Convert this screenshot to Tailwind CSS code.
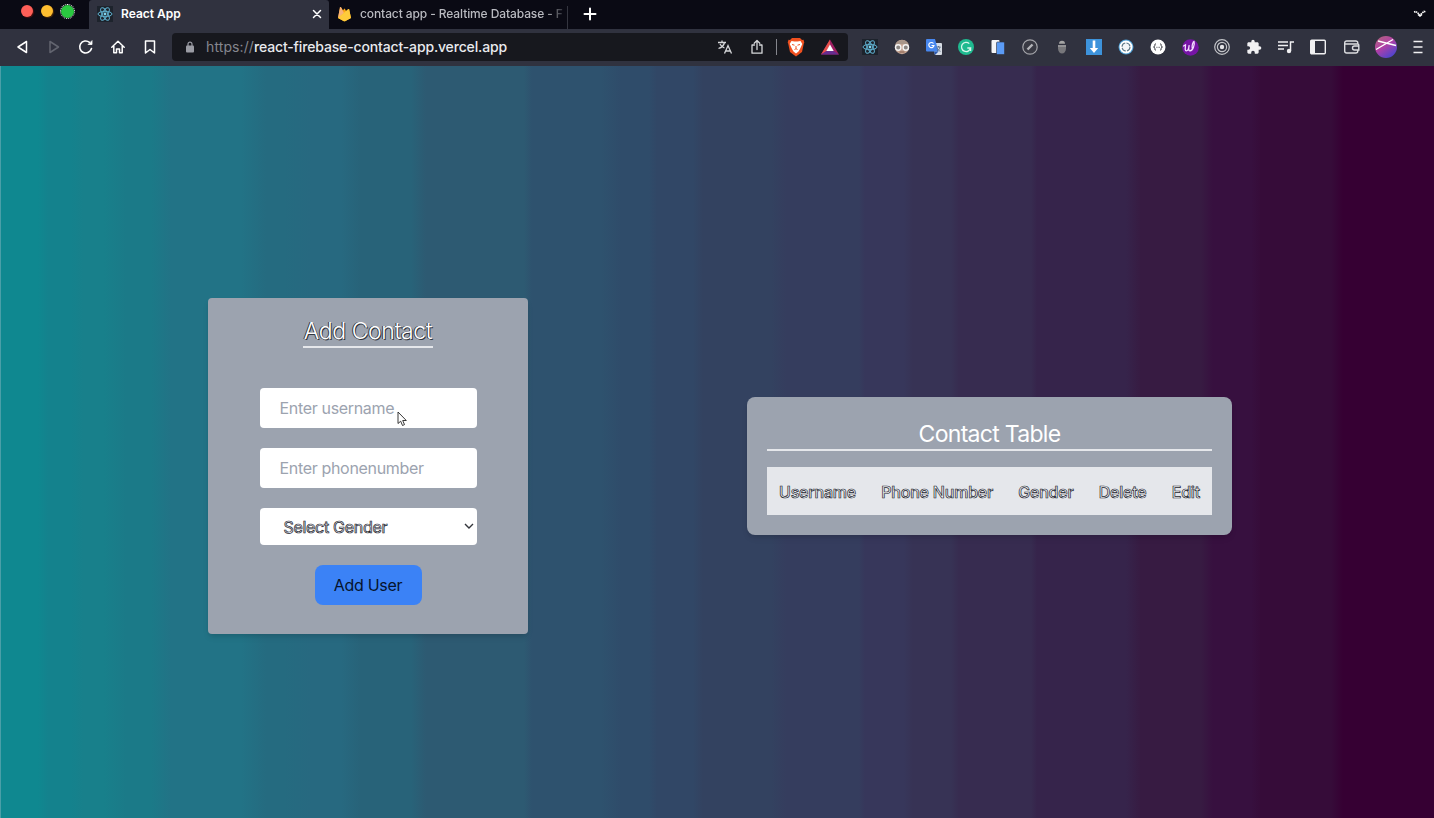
<!DOCTYPE html>
<html lang="en">
<head>
<meta charset="utf-8">
<title>React App</title>
<script src="https://cdn.jsdelivr.net/npm/@tailwindcss/browser@4"></script>
</head>
<body class="w-[1434px] h-[818px] overflow-hidden flex flex-col font-['Inter','Liberation_Sans',sans-serif] bg-[#30323f]">
<svg width="0" height="0" class="absolute">
  <defs>
    <symbol id="react" viewBox="0 0 16 16"><rect width="16" height="16" fill="#1d232c"/><g fill="none" stroke="#5fb0cf" stroke-width="1"><ellipse cx="8" cy="8" rx="7" ry="2.7"/><ellipse cx="8" cy="8" rx="7" ry="2.7" transform="rotate(60 8 8)"/><ellipse cx="8" cy="8" rx="7" ry="2.7" transform="rotate(120 8 8)"/></g><circle cx="8" cy="8" r="1.4" fill="#7fd4ee"/></symbol>
  </defs>
</svg>
<header class="h-[29px] shrink-0 flex bg-[#0a0a14]">
  <div class="w-[89px] pl-[21px] pt-[5px] flex gap-[8px]">
    <span class="size-[12px] rounded-full bg-[#fe5f58] shadow-[1px_1px_1px_#4a1010]"></span>
    <span class="size-[12px] rounded-full bg-[#febe30] shadow-[1px_1px_1px_#4a2a08]"></span>
    <span class="size-[13px] rounded-full bg-[#2ac840] outline-1 outline-dotted outline-white"></span>
  </div>
  <div class="w-[240px] flex items-center bg-[#30323f] pl-[8px] pr-[7px] pb-[2px] rounded-tl-[3px] rounded-tr-[3px]">
    <svg class="size-4"><use href="#react"/></svg>
    <span class="ml-[8px] text-[12px] font-semibold text-white leading-none">React App</span>
    <svg class="ml-auto size-[10px]" viewBox="0 0 10 10" stroke="#fff" stroke-width="1.5" stroke-linecap="round"><path d="M1.5 1.5l7 7M8.500 1.500l-7 7"/></svg>
  </div>
  <div class="w-[239px] flex items-center pl-[8px] pb-[2px]">
    <svg class="w-[15px] h-[17px] shrink-0" viewBox="0 0 15 17"><path d="M1 13L3 2.500Q3.300 1.500 4 2.300L6 5.500L7 4Q7.500 3 8 4L9 6L11.300 4.200Q12 3.800 12.200 4.500L14 13L8.500 16Q7.500 16.500 6.500 16Z" fill="#ffa712"/><path d="M1 13L3 2.500Q3.300 1.500 4 2.300L7 8Z" fill="#f8b27a"/><path d="M1 13L9 6L11.300 4.200Q12 3.800 12.200 4.500L14 13L8.500 16Q7.500 16.500 6.500 16Z" fill="#ffcb3b"/></svg>
    <span class="ml-[8px] w-[206px] whitespace-nowrap text-[12px] font-medium text-[#b9bac0] tracking-[-0.1px] leading-[16px] [mask-image:linear-gradient(90deg,#000_185px,transparent_208px)]">contact app - Realtime Database - F</span>
  </div>
  <div class="w-px h-[23px] mt-[6px] -ml-px bg-[#34353f]"></div>
  <svg class="ml-[15px] mt-[7px] w-[14px] h-[14px]" viewBox="0 0 14 14" stroke="#fff" stroke-width="2" stroke-linecap="round"><path d="M7 1.500v11M1.500 7h11"/></svg>
  <svg class="ml-auto mr-[7px] mt-[9px] w-[14px] h-[9px]" viewBox="0 0 14 9" fill="none" stroke="#fff"><path d="M1 3l2-.5L7 6l4-3.500 2 .5" stroke-width="1.600" stroke-dasharray="1.500 .6"/><path d="M5 5.500l2 1.500 2-1.500" stroke-width="1.500"/></svg>
</header>
<nav class="h-[37px] shrink-0 flex items-center bg-[#30323f] pl-[6px] pb-[2px]">
  <div class="flex text-white">
    <span class="w-8 grid place-items-center"><svg width="16" height="16" viewBox="0 0 16 16" fill="none" stroke="#fff" stroke-width="1.500" stroke-linejoin="round"><path d="M12.500 2.500v11L4 8z"/></svg></span>
    <span class="w-8 grid place-items-center"><svg width="16" height="16" viewBox="0 0 16 16" fill="none" stroke="#62646f" stroke-width="1.500" stroke-linejoin="round"><path d="M4 2.500v11L12.500 8z"/></svg></span>
    <span class="w-8 grid place-items-center"><svg width="16" height="16" viewBox="0 0 16 16" fill="none" stroke="#fff" stroke-width="1.600" stroke-linecap="round"><path d="M13.500 9.500A6 6 0 1 1 11.500 3.300"/><path d="M10.500 5.500h3.500V2z" fill="#fff" stroke-width=".8" stroke-linejoin="round"/></svg></span>
    <span class="w-8 grid place-items-center"><svg width="16" height="16" viewBox="0 0 16 16" fill="none" stroke="#fff" stroke-width="1.500" stroke-linecap="round" stroke-linejoin="round"><path d="M1.800 8.300L8 2.300l6.200 6M3.800 7v6.700h2.700V10h3v3.700h2.700V7"/></svg></span>
    <span class="w-8 grid place-items-center"><svg width="16" height="16" viewBox="0 0 16 16" fill="none" stroke="#fff" stroke-width="1.500" stroke-linejoin="round"><path d="M3.500 2h9v12L8 10.500 3.500 14z"/></svg></span>
  </div>
  <div class="ml-[6px] w-[676px] h-[28px] rounded-[4px] bg-[#17181e] flex items-center pl-[14px]">
    <svg width="8" height="12" viewBox="0 0 8 12"><path d="M2 5V3.200a2 2 0 0 1 4 0V5" fill="none" stroke="#9b9ca4" stroke-width="1.200"/><rect y="4.500" width="8" height="7" rx="1" fill="#9b9ca4"/></svg>
    <span class="ml-[12px] text-[14px] leading-none text-[#85868e] tracking-[0.100px]">https://</span><span class="text-[14px] leading-none text-[#e9eaee] font-medium tracking-[-0.150px]">react-firebase-contact-app.vercel.app</span>
    <div class="ml-auto flex items-center">
      <span class="w-8 grid place-items-center"><svg width="16" height="16" viewBox="0 0 16 16" fill="none" stroke="#d6d7da" stroke-width="1.300"><path d="M1 3.500h8M5 1.500v2M7.500 3.500C7 6 4.500 8.500 1.500 9.500M3 5c1 2 2.500 3.300 4.500 4M7.500 14.500L11 6.500l3.500 8M8.700 12h4.600"/></svg></span>
      <span class="w-8 grid place-items-center"><svg width="16" height="16" viewBox="0 0 16 16" fill="none" stroke="#d6d7da" stroke-width="1.300" stroke-linecap="round" stroke-linejoin="round"><path d="M5.500 6H3v8.200h10V6h-2.500M8 10.500V1.800M5.200 4.300L8 1.500l2.800 2.800"/></svg></span>
      <span class="w-px h-4 bg-[#85868d] ml-[3px] mr-[3px]"></span>
      <span class="w-8 grid place-items-center"><svg width="18" height="20" viewBox="0 0 18 20"><path d="M5 1h8l2 2 1.500-.2.800 2.700-.5 1-1.800 8.500L9 19.500 3 15 1.200 6.500l-.5-1L1.500 2.800 3 3z" fill="#f0501f"/><path d="M4.500 4l3 .5h3l3-.5L15.300 7l-1.600 3.500-1 2-1.200 2L9 16.500l-2.500-2-1.200-2-1-2L2.700 7z" fill="#fff"/><path d="M5 7.500l2.500.7M13 7.500l-2.500.7M7.500 12.500l1.500-.8 1.500.8M9 9v2.500" fill="none" stroke="#f0501f" stroke-width="1"/></svg></span>
      <span class="w-9 grid place-items-center"><svg width="18" height="16" viewBox="0 0 18 16"><path d="M9 .5L18 15.500H0z" fill="#9e1f63"/><path d="M9 .5L0 15.500 5.500 12 9 6z" fill="#e8504a"/><path d="M0 15.500h18L12.500 12h-7z" fill="#662d91"/><path d="M9 5.500L12.700 12H5.300z" fill="#fff"/></svg></span>
    </div>
  </div>
  <div class="ml-[6px] flex items-center">
    <span class="w-8 grid place-items-center"><svg class="size-4"><use href="#react"/></svg></span>
    <span class="w-8 grid place-items-center"><svg width="16" height="16" viewBox="0 0 16 16"><circle cx="8" cy="8" r="7.200" fill="#c3a493"/><path d="M1.500 5a7.200 7.200 0 0 1 13 0z" fill="#a8968a"/><circle cx="4.200" cy="8.500" r="2.700" fill="#8a8582" stroke="#f3f3f3" stroke-width="1.400"/><circle cx="11.800" cy="8.500" r="2.700" fill="#8a8582" stroke="#f3f3f3" stroke-width="1.400"/><path d="M5.500 13h5" stroke="#855c4a"/></svg></span>
    <span class="w-8 grid place-items-center"><svg width="16" height="16" viewBox="0 0 16 16"><path d="M6 4h9a1 1 0 0 1 1 1v10a1 1 0 0 1-1 1H9z" fill="#d8dde5"/><path d="M1 0h8l3.500 12.500H1a1 1 0 0 1-1-1V1a1 1 0 0 1 1-1z" fill="#4787ee"/><path d="M7.500 4.500A2.600 2.600 0 1 0 8 6.500H5.500" fill="none" stroke="#fff" stroke-width="1.200"/><path d="M10.500 8h4M12.500 7v1M14 8c-.4 2-1.600 3.300-3 4.200M11 9c.6 1.500 1.800 2.700 3.500 3.300" fill="none" stroke="#526780" stroke-width=".9"/><path d="M9 16l3.500-3.500H8z" fill="#2858b0"/></svg></span>
    <span class="w-8 grid place-items-center"><svg width="16" height="16" viewBox="0 0 16 16"><circle cx="8" cy="8" r="8" fill="#1fba90"/><path d="M11.300 4.600A4.600 4.600 0 1 0 12.600 9H9.300M12.600 9v3" fill="none" stroke="#d8f5ec" stroke-width="1.300"/></svg></span>
    <span class="w-8 grid place-items-center"><svg width="16" height="16" viewBox="0 0 16 16"><rect x="1.500" y="1" width="8" height="13" rx="1" fill="#f5f5f7"/><rect x="6.500" y="3" width="8" height="12.500" rx="1" fill="#5b9bf5" stroke="#30323f" stroke-width=".6"/></svg></span>
    <span class="w-8 grid place-items-center"><svg width="16" height="16" viewBox="0 0 16 16"><circle cx="8" cy="8" r="7.200" fill="#383943" stroke="#a4a5aa" stroke-width="1.200"/><path d="M5.500 10.500l5-5" stroke="#b4b5ba" stroke-width="2.400"/></svg></span>
    <span class="w-8 grid place-items-center"><svg width="16" height="16" viewBox="0 0 16 16"><path d="M5 4.800a3 3 0 0 1 6 0z" fill="#a5a5a5"/><path d="M4 6h8v3.500c0 3-2 5-4 5s-4-2-4-5z" fill="#77777b"/><path d="M4 6h8v2H4z" fill="#929295"/></svg></span>
    <span class="w-8 grid place-items-center"><svg width="16" height="16" viewBox="0 0 16 16"><rect width="16" height="16" fill="#3d93db"/><path d="M6.700 1.500h2.600V9h2.900L8 14 3.800 9h2.900z" fill="#fff"/></svg></span>
    <span class="w-8 grid place-items-center"><svg width="16" height="16" viewBox="0 0 16 16"><circle cx="8" cy="8" r="7.500" fill="#4a9bd0"/><circle cx="8" cy="8" r="6.500" fill="#fff"/><circle cx="8" cy="8" r="4" fill="#f2f5f7" stroke="#5e7684" stroke-width="1.100" stroke-dasharray="5 1.280"/></svg></span>
    <span class="w-8 grid place-items-center"><svg width="16" height="16" viewBox="0 0 16 16"><circle cx="8" cy="8" r="7.500" fill="#fff"/><path d="M6 4.800c-1.500 0-1 1-1.200 2S3.500 8 3.500 8s1.100.1 1.300 1.100-.3 2.100 1.200 2.100M10 4.800c1.500 0 1 1 1.200 2S12.500 8 12.500 8s-1.100.1-1.300 1.100.3 2.100-1.200 2.100" fill="none" stroke="#33353c" stroke-width="1"/><path d="M6.300 8.300h3.600" stroke="#55575e" stroke-width=".9" stroke-dasharray=".9 .45"/></svg></span>
    <span class="w-8 grid place-items-center"><svg width="18" height="18" viewBox="0 0 18 18"><circle cx="9.500" cy="9.500" r="8.300" fill="#7614a5"/><path d="M2.500 8l2-1.200c0 2.500-1 6 .8 6S8 9 8.200 7.200C7.500 10 7.300 13 9 12.800 12 12.500 14 6.500 13 3.500c-1 0-2.300 4-1.800 6.500" fill="none" stroke="#f4dcff" stroke-width="1.300" stroke-linecap="round"/></svg></span>
    <span class="w-8 grid place-items-center"><svg width="16" height="16" viewBox="0 0 16 16" fill="none" stroke="#c3c4c8" stroke-width="1.200"><circle cx="8" cy="8" r="7.300"/><circle cx="8" cy="8" r="4.600"/><circle cx="8" cy="8" r="2.200" fill="#e3e3e6" stroke="none"/></svg></span>
    <span class="w-8 grid place-items-center"><svg width="16" height="16" viewBox="0 0 24 24" fill="#f1f1f3"><path d="M20.500 11H19V7c0-1.100-.9-2-2-2h-4V3.500a2.500 2.500 0 0 0-5 0V5H4c-1.100 0-2 .9-2 2v3.800h1.500a2.700 2.700 0 0 1 0 5.400H2V20c0 1.100.9 2 2 2h3.800v-1.500a2.700 2.700 0 0 1 5.400 0V22H17c1.100 0 2-.9 2-2v-4h1.500a2.500 2.500 0 0 0 0-5z"/></svg></span>
    <span class="w-8 grid place-items-center"><svg width="16" height="14" viewBox="0 0 16 14" fill="none" stroke="#f1f1f3" stroke-width="1.500"><path d="M0 2h10M0 5.500h10M0 9h6M12.500 11V2H16"/><circle cx="11" cy="11" r="2.200" fill="#f1f1f3" stroke="none"/></svg></span>
    <span class="w-8 grid place-items-center"><svg width="16" height="16" viewBox="0 0 16 16"><rect x=".7" y="1.200" width="14.600" height="13.600" rx="1" fill="none" stroke="#f1f1f3" stroke-width="1.400"/><path d="M1 1.500h4v13H1z" fill="#f1f1f3"/></svg></span>
    <span class="w-9 grid place-items-center"><svg width="16" height="14" viewBox="0 0 16 14" fill="none" stroke="#dcdde0" stroke-width="1.400"><path d="M13.800 4V3a2 2 0 0 0-2-2H2.700a2 2 0 0 0-2 2v8a2 2 0 0 0 2 2h9.100a2 2 0 0 0 2-2v-1M1 4h12.800a1 1 0 0 1 1 1v5H10.500a2 2 0 0 1 0-4h4.300"/></svg></span>
    <span class="w-8 grid place-items-center"><svg width="22" height="22" viewBox="0 0 22 22"><defs><linearGradient id="av" x1="0" y1="0" x2=".7" y2="1"><stop offset="0" stop-color="#b06a78"/><stop offset=".5" stop-color="#b13fa6"/><stop offset="1" stop-color="#4c45cf"/></linearGradient></defs><circle cx="11" cy="11" r="11" fill="url(#av)"/><path d="M1 13.500L18 3.500M3 5l18 4.500" stroke="#fff" stroke-width="1.300"/></svg></span>
    <span class="w-8 grid place-items-center"><svg width="10" height="14" viewBox="0 0 10 14" stroke="#f1f1f3" stroke-width="1.600"><path d="M.5 1.500h9M.5 7h9M.5 12.500h9"/></svg></span>
  </div>
</nav>
<main class="flex-1 flex items-center pt-[48px] border-l border-[#4a9fa8] bg-[linear-gradient(90deg,#0f8890_0_37px,#14828d_47px_70px,#18808b_82px_103px,#1b7a88_125px_150px,#227386_170px_240px,#256b80_265px_283px,#276980_310px_340px,#286379_360px_410px,#2d5a72_425px_523px,#2e526e_531px_600px,#2f4c6a_620px_648px,#314766_656px_692px,#334260_702px_770px,#353d5e_785px_858px,#37375b_864px_903px,#373355_912px_950px,#372c50_958px_1030px,#36244b_1036px_1125px,#371b42_1140px_1200px,#37103f_1212px_1250px,#360c39_1260px_1330px,#360033_1342px)]">
  <section class="ml-[207px] w-[320px] h-[336px] rounded-[4px] bg-[#9ca3af] shadow-md flex flex-col items-center pt-[19px]">
    <h1 class="w-[130px] h-[31px] border-b-2 border-[#e5e7eb] flex justify-center text-[23px] leading-[28px] font-light text-white whitespace-nowrap tracking-[-0.400px] [text-shadow:-1px_0_#30343c,1px_1px_#30343c]">Add Contact</h1>
    <form class="mt-[40px] w-[217px] flex flex-col gap-[20px]">
      <div class="relative">
        <input class="block w-full h-[40px] rounded-[4px] bg-white px-[20px] text-[16px] tracking-[-0.330px] placeholder:text-[#9ca3af]" placeholder="Enter username">
        <svg class="absolute left-[137px] top-[23px]" width="11" height="16" viewBox="0 0 11 16"><path d="M1 1v11.500l2.700-2.300 1.800 4.300 2-.9-1.800-4.100h3.600z" fill="#fff" stroke="#222" stroke-width=".9"/></svg>
      </div>
      <input class="block w-full h-[40px] rounded-[4px] bg-white px-[20px] text-[16px] tracking-[-0.330px] placeholder:text-[#9ca3af]" placeholder="Enter phonenumber">
      <div class="h-[37px] rounded-[4px] bg-white pl-[24px] pr-[3px] flex items-center justify-between text-[16px] tracking-[-0.300px] text-[#e8e9ee] [-webkit-text-stroke:0.700px_#22242e]">
        <span>Select Gender</span>
        <svg width="10" height="7" viewBox="0 0 10 7" fill="none" stroke="#33353b" stroke-width="1.400"><path d="M1 1l4 4 4-4"/></svg>
      </div>
      <button type="button" class="mx-auto w-[107px] h-[40px] rounded-[8px] bg-[#3b82f6] text-[16px] tracking-[-0.300px] text-[#06142e]">Add User</button>
    </form>
  </section>
  <section class="ml-[219px] w-[485px] h-[138px] rounded-[8px] bg-[#9ca3af] shadow-md px-[20px] pt-[20px]">
    <h2 class="h-[34px] border-b-2 border-[#e5e7eb] text-center text-[23px] leading-[34px] text-white tracking-[-0.700px]">Contact Table</h2>
    <div class="mt-[16px] h-[48px] bg-[#e5e7eb] px-[12px] flex items-center justify-between text-[16px] tracking-[-0.200px] pt-px font-medium text-[#f4f5f7] [-webkit-text-stroke:0.700px_#22242e]">
      <span>Username</span><span>Phone Number</span><span>Gender</span><span>Delete</span><span>Edit</span>
    </div>
  </section>
</main>
</body>
</html>
